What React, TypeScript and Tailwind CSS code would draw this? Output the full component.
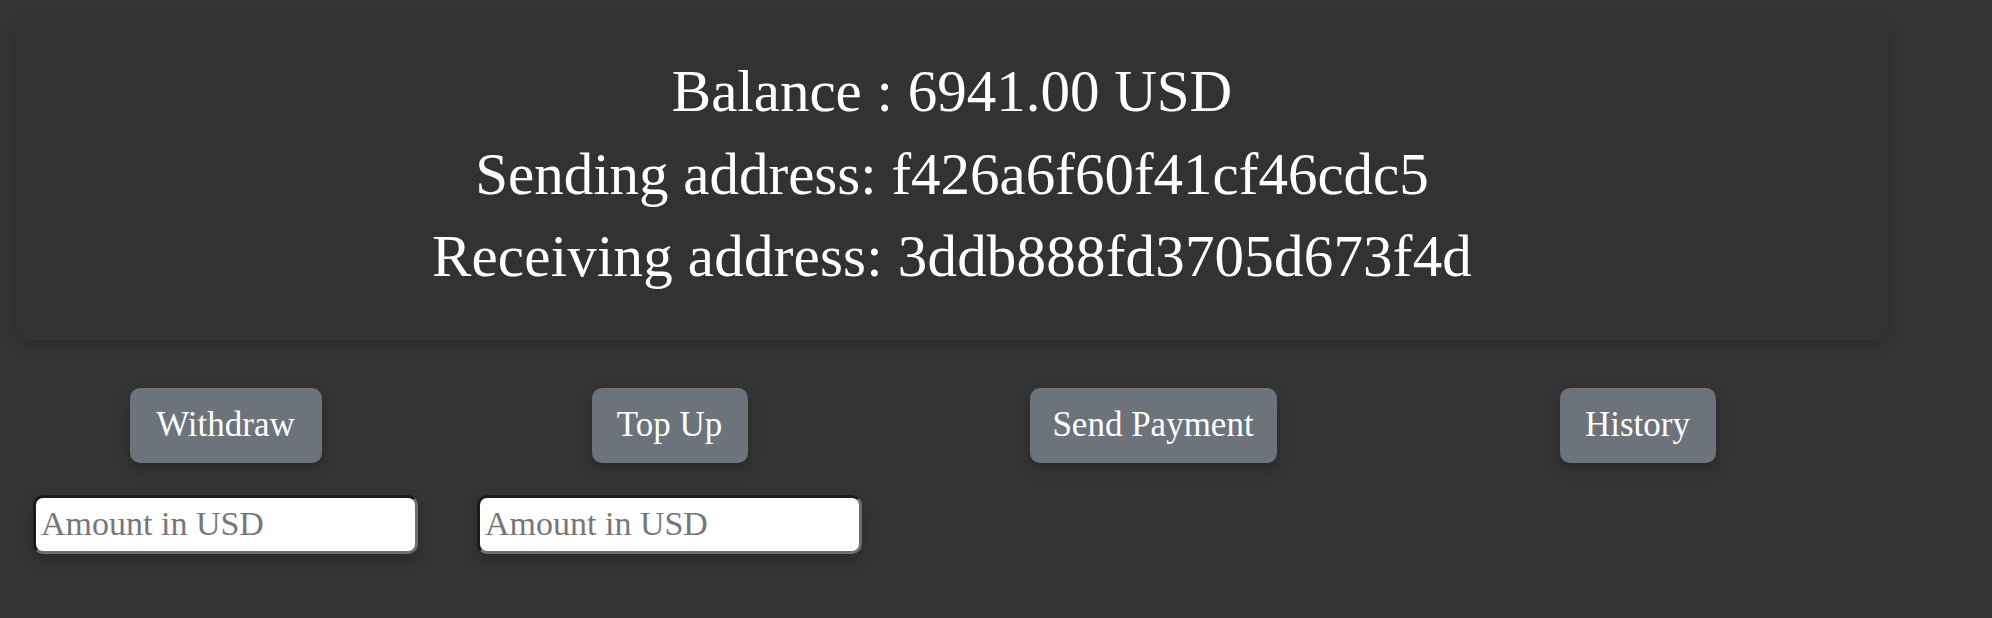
import React from "react";

const serif = { fontFamily: '"Liberation Serif", "Times New Roman", serif' };

const actions = [
  { label: "Withdraw", input: true, w: "w-[192px]" },
  { label: "Top Up", input: true, w: "w-[156px]" },
  { label: "Send Payment", input: false, w: "w-[247px]" },
  { label: "History", input: false, w: "w-[156px]" },
];

const WalletInfo = () => {
  return (
    <div className="ml-[16px] mt-[20px] w-[1872px] rounded-[15px] bg-[#323232] pt-[30px] pb-[42px] text-center text-white shadow-[0_4px_14px_rgba(0,0,0,0.18)]">
      <p className="text-[59px] leading-[82.5px]">Balance : 6941.00 USD</p>
      <p className="text-[59px] leading-[82.5px]">
        Sending address: f426a6f60f41cf46cdc5
      </p>
      <p className="text-[59px] leading-[82.5px] tracking-[0.2px]">
        Receiving address: 3ddb888fd3705d673f4d
      </p>
    </div>
  );
};

export default function App() {
  return (
    <div className="min-h-[618px] w-full overflow-hidden bg-[#343434]" style={serif}>
      <WalletInfo />
      <div className="mt-[48px] grid grid-cols-[451px_437px_530px_439px]">
        {actions.map((a) => (
          <div key={a.label} className="flex flex-col items-center gap-[32px]">
            <button
              className={`flex h-[75px] items-center justify-center whitespace-nowrap rounded-[10px] bg-[#6c737b] text-[35px] text-white shadow-[0_6px_14px_rgba(0,0,0,0.22)] ${a.w}`}
            >
              {a.label}
            </button>
            {a.input && (
              <input
                type="text"
                placeholder="Amount in USD"
                className="h-[59px] w-[385px] rounded-[10px] border-[3px] border-t-[#1b1b1b] border-l-[#1b1b1b] border-b-[#6e6e6e] border-r-[#6e6e6e] bg-white px-[5px] text-[34px] text-black placeholder:text-[#777777] shadow-[0_6px_14px_rgba(0,0,0,0.2)] outline-none"
              />
            )}
          </div>
        ))}
      </div>
    </div>
  );
}
